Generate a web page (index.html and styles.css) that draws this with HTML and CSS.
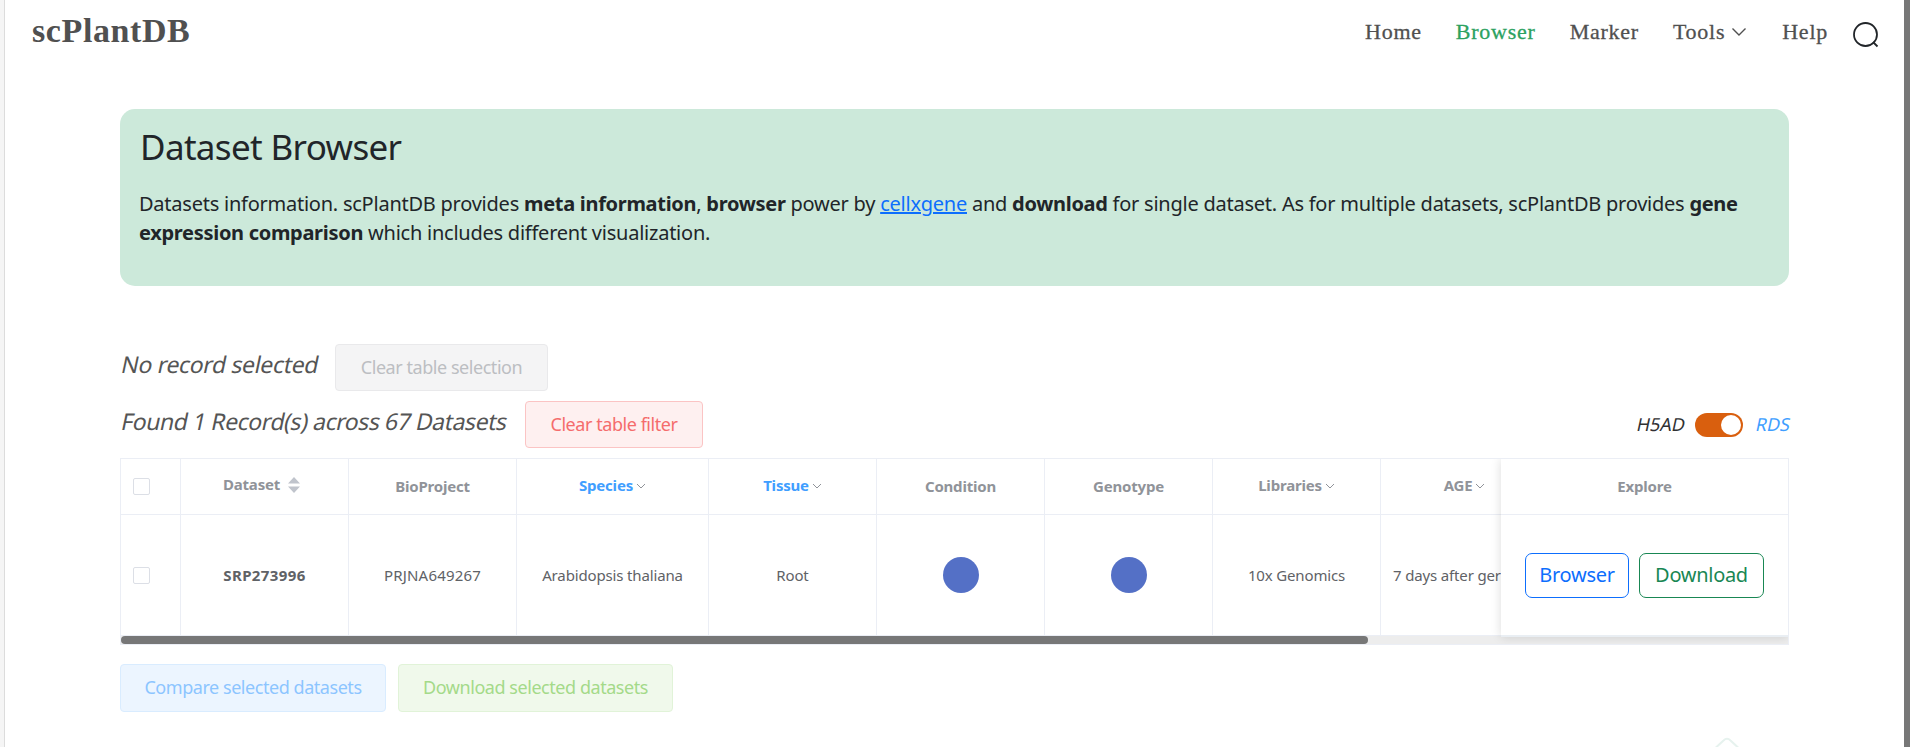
FILE: index.html
```html
<!DOCTYPE html>
<html lang="en">
<head>
<meta charset="utf-8">
<title>scPlantDB</title>
<link rel="stylesheet" href="styles.css">
</head>
<body>
<div class="page">
  <header class="top">
    <a class="brand">scPlantDB</a>
    <nav class="nav">
      <a class="link">Home</a>
      <a class="link active">Browser</a>
      <a class="link">Marker</a>
      <a class="link tools">Tools<svg class="caret" width="16" height="10" viewBox="0 0 16 10"><path d="M1.500 1.500 8 8l6.500-6.500"/></svg></a>
      <a class="link">Help</a>
      <svg class="search" width="28" height="28" viewBox="0 0 28 28"><circle cx="13.500" cy="13.500" r="11.500"/><path d="m21 21 4.500 4.500"/></svg>
    </nav>
  </header>
  <main class="main">
    <section class="banner">
      <h1>Dataset Browser</h1>
      <p>Datasets information. scPlantDB provides <b>meta information</b>, <b>browser</b> power by <a class="cxg">cellxgene</a> and <b>download</b> for single dataset. As for multiple datasets, scPlantDB provides <b>gene expression comparison</b> which includes different visualization.</p>
    </section>

    <div class="row first">
      <span class="status">No record selected</span>
      <button class="btn info" disabled>Clear table selection</button>
    </div>
    <div class="row second">
      <span class="status found">Found 1 Record(s) across 67 Datasets</span>
      <button class="btn danger">Clear table filter</button>
      <div class="format">
        <span class="slant">H5AD</span>
        <span class="switch"><span class="knob"></span></span>
        <span class="slant on">RDS</span>
      </div>
    </div>

    <div class="table">
      <div class="cells head">
        <div class="cell check"><span class="box"></span></div>
        <div class="cell sortable">Dataset<svg class="sort" width="12" height="16" viewBox="0 0 12 16"><path d="M6 0 12 6.500H0zM6 16 0 9.500h12z"/></svg></div>
        <div class="cell">BioProject</div>
        <div class="cell filterable blue">Species<svg class="filter" width="10" height="6" viewBox="0 0 10 6"><path d="m1 1 4 4 4-4"/></svg></div>
        <div class="cell filterable blue">Tissue<svg class="filter" width="10" height="6" viewBox="0 0 10 6"><path d="m1 1 4 4 4-4"/></svg></div>
        <div class="cell">Condition</div>
        <div class="cell">Genotype</div>
        <div class="cell filterable">Libraries<svg class="filter" width="10" height="6" viewBox="0 0 10 6"><path d="m1 1 4 4 4-4"/></svg></div>
        <div class="cell filterable">AGE<svg class="filter" width="10" height="6" viewBox="0 0 10 6"><path d="m1 1 4 4 4-4"/></svg></div>
      </div>
      <div class="cells body">
        <div class="cell check"><span class="box"></span></div>
        <div class="cell id">SRP273996</div>
        <div class="cell code">PRJNA649267</div>
        <div class="cell">Arabidopsis thaliana</div>
        <div class="cell">Root</div>
        <div class="cell dots"><span class="dot"></span></div>
        <div class="cell dots"><span class="dot"></span></div>
        <div class="cell">10x Genomics</div>
        <div class="cell long">7 days after ger</div>
      </div>
      <div class="track"><div class="thumb"></div></div>
      <div class="pinned">
        <div class="pin-head">Explore</div>
        <div class="pin-body">
          <button class="act browse">Browser</button>
          <button class="act download">Download</button>
        </div>
      </div>
    </div>

    <div class="row bulk">
      <button class="btn primary" disabled>Compare selected datasets</button>
      <button class="btn success" disabled>Download selected datasets</button>
    </div>
  </main>
  <svg class="to-top" width="44" height="11" viewBox="0 0 44 11"><path d="M5 17 18.500 4.500Q22 1 25.500 4.500L39 17"/></svg>
</div>
</body>
</html>
```
FILE: styles.css
```css
* { box-sizing: border-box; }
body {
  margin: 0;
  height: 747px;
  overflow: hidden;
  background: #f5f5f5;
  font-family: "Noto Sans", "Open Sans", sans-serif;
  color: #212529;
}
.page {
  position: relative;
  height: 747px;
  margin-left: 4px;
  border-left: 1px solid #dcdcdc;
  border-right: 6px solid #777;
  background: #fff;
  overflow: hidden;
}

/* header */
.top {
  display: flex;
  justify-content: space-between;
  height: 109px;
  padding: 0 24px 0 27px;
  font-family: "Liberation Serif", serif;
  color: #505050;
}
.brand { font-size: 34px; font-weight: 700; line-height: 61px; letter-spacing: .6px; }
.nav { display: flex; align-items: flex-start; gap: 34px; }
.link {
  font-size: 22px;
  line-height: 64px;
  letter-spacing: .75px;
  -webkit-text-stroke: .3px currentColor;
}
.link.active { color: #2ca25f; }
.tools { display: flex; align-items: center; gap: 6px; margin-right: 1px; }
.caret { fill: none; stroke: #505050; stroke-width: 1.4; }
.search { margin: 21px 0 0 -10px; fill: none; stroke: #212529; stroke-width: 1.8; }

/* intro banner */
.main { width: 1669px; margin-left: 115px; }
.banner {
  height: 177px;
  padding: 17px 20px 0;
  border-radius: 15px;
  background: #cce9da;
}
.banner h1 { margin: 0; font-size: 35px; font-weight: 400; line-height: 42px; letter-spacing: -.65px; }
.banner p { margin: 21px 0 0 -1px; font-size: 20px; line-height: 29px; letter-spacing: -.24px; }
.banner b { letter-spacing: -.3px; }
.cxg { color: #0d6efd; text-decoration: underline; }

/* status rows and buttons */
.row { display: flex; align-items: flex-start; height: 47px; }
.first { margin-top: 58px; }
.second { margin-top: 10px; }
.status {
  width: 215px;
  padding-left: 2px;
  font-size: 23px;
  line-height: 40px;
  letter-spacing: -.34px;
  white-space: nowrap;
  color: #555;
  transform: skewX(-12deg);
}
.found { width: 405px; letter-spacing: -.44px; }
.btn {
  height: 47px;
  padding: 0 0 2px;
  border: 1px solid;
  border-radius: 4px;
  font: 18px "Noto Sans", "Open Sans", sans-serif;
  letter-spacing: -.45px;
  white-space: nowrap;
}
.info { width: 213px; color: #bcbec2; background: #f4f4f5; border-color: #e9e9eb; }
.danger { width: 178px; color: #f56c6c; background: #fef0f0; border-color: #fbc4c4; }
.format { display: flex; align-items: center; height: 48px; margin: 0 -1px 0 auto; font-size: 18px; }
.slant { transform: skewX(-12deg); color: #303133; line-height: 46px; padding-bottom: 2px; }
.slant.on { color: #409eff; }
.switch {
  display: flex;
  justify-content: flex-end;
  width: 48px;
  height: 24px;
  margin: 0 13px 0 10px;
  padding: 2px;
  border-radius: 12px;
  background: #d95f0e;
}
.knob { width: 20px; height: 20px; border-radius: 50%; background: #fff; }

/* table */
.table {
  position: relative;
  height: 187px;
  margin-top: 10px;
  border: 1px solid #ebeef5;
  overflow: hidden;
  font-size: 15px;
  color: #606266;
}
.cells {
  display: grid;
  grid-template-columns: 60px 168px 168px 192px 168px 168px 168px 168px 168px;
  border-bottom: 1px solid #ebeef5;
}
.head { height: 56px; font-weight: 700; color: #909399; letter-spacing: -.2px; }
.body { height: 121px; letter-spacing: -.15px; }
.cell {
  display: flex;
  align-items: center;
  justify-content: center;
  padding-bottom: 1px;
  border-right: 1px solid #ebeef5;
  white-space: nowrap;
}
.check { justify-content: flex-start; padding: 0 0 0 12px; }
.box { width: 17px; height: 17px; border: 1px solid #dcdfe6; border-radius: 2px; background: #fff; }
.sortable { padding: 0 6px 5px 0; }
.filterable { padding-bottom: 3px; }
.blue { color: #409eff; }
.sort { margin: 2px 0 0 8px; fill: #c0c4cc; }
.filter { margin: 1px 0 0 3px; fill: none; stroke: #909399; stroke-width: 1; }
.id { font-weight: 700; letter-spacing: .4px; }
.code { letter-spacing: .2px; }
.long { justify-content: flex-start; padding-left: 12px; }
.dots { padding: 0; }
.dot { width: 36px; height: 36px; border-radius: 50%; background: #5470c6; }
.track { height: 9px; background: #ededed; }
.thumb { width: 1247px; height: 8px; border-radius: 4px; background: #777; }
.pinned {
  position: absolute;
  top: 0;
  right: 0;
  width: 287px;
  height: 178px;
  border-bottom: 2px solid #e9eef3;
  background: #fff;
  box-shadow: 0 0 10px rgba(0, 0, 0, .14);
}
.pin-head {
  display: flex;
  align-items: center;
  justify-content: center;
  height: 56px;
  padding-bottom: 1px;
  border-bottom: 1px solid #ebeef5;
  font-weight: 700;
  color: #909399;
  letter-spacing: -.2px;
}
.pin-body { display: flex; align-items: center; justify-content: center; gap: 10px; height: 121px; }
.act {
  height: 45px;
  padding: 0 0 2px;
  border: 1px solid;
  border-radius: 7px;
  background: #fff;
  font: 20px "Noto Sans", "Open Sans", sans-serif;
  letter-spacing: -.3px;
}
.browse { width: 104px; color: #0d6efd; border-color: #0d6efd; }
.download { width: 125px; color: #198754; border-color: #198754; }

/* bulk actions */
.bulk { gap: 12px; margin-top: 19px; height: 48px; }
.bulk .btn { height: 48px; }
.primary { width: 266px; color: #8cc5ff; background: #ecf5ff; border-color: #d9ecff; }
.success { width: 275px; color: #a4da89; background: #f0f9eb; border-color: #e1f3d8; }

.to-top {
  position: absolute;
  left: 1700px;
  bottom: 0;
  fill: none;
  stroke: #e6f2ee;
  stroke-width: 2;
}
```
